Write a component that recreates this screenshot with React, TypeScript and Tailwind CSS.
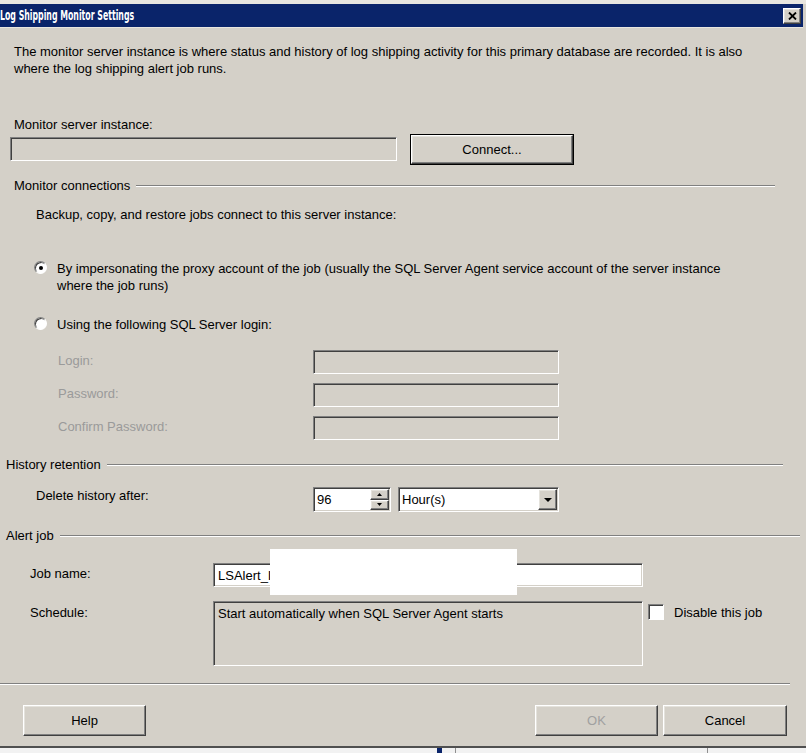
import React from 'react'

const sunken =
  'border border-t-[#808080] border-l-[#808080] border-b-white border-r-white shadow-[inset_1px_1px_0_#404040,inset_-1px_-1px_0_#d4d0c8]'
const raised =
  'border border-t-white border-l-white border-b-[#404040] border-r-[#404040] shadow-[inset_-1px_-1px_0_#808080,inset_1px_1px_0_#e4e2dc]'

const GroupHeader: React.FC<{ label: string; className: string }> = ({ label, className }) => (
  <div className={`flex items-center h-[17px] ${className}`}>
    <span>{label}</span>
    <div className="flex-1 ml-[6px] border-t border-t-[#808080] border-b border-b-white" />
  </div>
)

const Radio: React.FC<{ checked?: boolean }> = ({ checked }) => (
  <div className="w-[13px] h-[13px] rounded-full bg-white border border-t-[#808080] border-l-[#808080] border-b-white border-r-white shadow-[inset_1px_1px_0_#404040] flex items-center justify-center shrink-0">
    {checked && <div className="w-[4px] h-[4px] rounded-full bg-black" />}
  </div>
)

const Button: React.FC<{ label: string; disabled?: boolean; className: string }> = ({ label, disabled, className }) => (
  <div
    className={`${raised} bg-[#d4d0c8] h-[31px] flex items-center justify-center ${className} ${
      disabled ? 'text-[#a0a0a0]' : 'text-black'
    }`}
  >
    {label}
  </div>
)

const LoginRow: React.FC<{ label: string; className?: string }> = ({ label, className }) => (
  <div className={`flex items-center h-[24px] ${className ?? ''}`}>
    <span className="w-[313px] pl-[58px] text-[#9a9a9a] -mt-[4px]">{label}</span>
    <div className={`${sunken} w-[246px] h-[24px] bg-[#d4d0c8]`} />
  </div>
)

export default function App() {
  return (
    <div
      className="relative w-[806px] h-[753px] overflow-hidden bg-[#d4d0c8] text-black text-[13px] leading-[17px]"
      style={{ fontFamily: '"Liberation Sans", Arial, sans-serif' }}
    >
      {/* title bar */}
      <div className="h-[4px] bg-[#e8e6e0]" />
      <div className="h-[23px] bg-[#0a246a] flex items-center justify-between pr-[2px] mr-[3px]">
        <span
          className="text-white font-bold text-[14px] origin-left scale-x-[0.62] whitespace-nowrap"
          style={{ fontFamily: '"Liberation Sans Narrow", "DejaVu Sans Condensed", "Liberation Sans", sans-serif' }}
        >
          Log Shipping Monitor Settings
        </span>
        <div className={`${raised} bg-[#d4d0c8] w-[18px] h-[16px] flex items-center justify-center`}>
          <svg width="9" height="8" viewBox="0 0 9 8">
            <path d="M1 0.5 L8 7.5 M8 0.5 L1 7.5" stroke="#000" strokeWidth="1.8" />
          </svg>
        </div>
      </div>
      <div className="h-[1px] bg-[#e8e6e0] mr-[3px]" />

      {/* intro */}
      <p className="mt-[15px] pl-[14px] pr-[40px]">
        The monitor server instance is where status and history of log shipping activity for this primary database are
        recorded. It is also where the log shipping alert job runs.
      </p>

      <div className="mt-[39px] pl-[14px]">Monitor server instance:</div>
      <div className="mt-[1px] flex items-start pl-[10px] h-[31px]">
        <div className={`${sunken} mt-[3px] w-[387px] h-[24px] bg-[#d4d0c8]`} />
        <div className="ml-[13px] w-[164px] h-[31px] border border-black">
          <div className={`${raised} w-full h-full bg-[#d4d0c8] flex items-center justify-center`}>Connect...</div>
        </div>
      </div>

      {/* monitor connections */}
      <GroupHeader label="Monitor connections" className="mt-[12px] pl-[14px] pr-[31px]" />
      <div className="mt-[12px] pl-[36px]">Backup, copy, and restore jobs connect to this server instance:</div>

      <div className="mt-[37px] flex items-start pl-[34px] pr-[56px]">
        <div className="mt-[1px]">
          <Radio checked />
        </div>
        <span className="ml-[10px]">
          By impersonating the proxy account of the job (usually the SQL Server Agent service account of the server
          instance where the job runs)
        </span>
      </div>

      <div className="mt-[22px] flex items-start pl-[34px]">
        <div className="mt-[1px]">
          <Radio />
        </div>
        <span className="ml-[10px]">Using the following SQL Server login:</span>
      </div>

      <LoginRow label="Login:" className="mt-[17px]" />
      <LoginRow label="Password:" className="mt-[9px]" />
      <LoginRow label="Confirm Password:" className="mt-[9px]" />

      {/* history retention */}
      <GroupHeader label="History retention" className="mt-[16px] pl-[6px] pr-[23px]" />
      <div className="mt-[14px] flex items-start h-[25px]">
        <span className="w-[313px] pl-[36px]">Delete history after:</span>
        <div className={`${sunken} w-[78px] h-[25px] bg-white flex items-center`}>
          <span className="flex-1 pl-[3px]">96</span>
          <div className="w-[19px] h-[21px] mr-[1px] flex flex-col">
            <div className={`${raised} flex-1 bg-[#d4d0c8] flex items-center justify-center`}>
              <svg width="5" height="3" viewBox="0 0 5 3">
                <path d="M2.5 0 L5 3 L0 3 Z" fill="#000" />
              </svg>
            </div>
            <div className={`${raised} flex-1 bg-[#d4d0c8] flex items-center justify-center`}>
              <svg width="5" height="3" viewBox="0 0 5 3">
                <path d="M0 0 L5 0 L2.5 3 Z" fill="#000" />
              </svg>
            </div>
          </div>
        </div>
        <div className={`${sunken} ml-[7px] w-[161px] h-[25px] bg-white flex items-center`}>
          <span className="flex-1 pl-[3px]">Hour(s)</span>
          <div className={`${raised} w-[19px] h-[21px] mr-[1px] bg-[#d4d0c8] flex items-center justify-center`}>
            <svg width="8" height="4" viewBox="0 0 8 4">
              <path d="M0 0 L8 0 L4 4 Z" fill="#000" />
            </svg>
          </div>
        </div>
      </div>

      {/* alert job */}
      <GroupHeader label="Alert job" className="mt-[15px] pl-[6px] pr-[6px]" />
      <div className="mt-[19px] flex items-start h-[24px]">
        <span className="w-[213px] pl-[30px] mt-[2px]">Job name:</span>
        <div className={`${sunken} w-[430px] h-[24px] bg-white flex items-center pl-[4px]`}>LSAlert_I</div>
      </div>
      <div className="mt-[14px] flex items-start h-[65px]">
        <span className="w-[213px] pl-[30px] mt-[3px]">Schedule:</span>
        <div className={`${sunken} w-[430px] h-[65px] bg-[#d4d0c8] pl-[4px] pt-[3px]`}>
          Start automatically when SQL Server Agent starts
        </div>
        <div className="ml-[5px] mt-[3px] w-[16px] h-[16px] bg-white border border-t-[#808080] border-l-[#808080] border-b-white border-r-white shadow-[inset_1px_1px_0_#404040]" />
        <span className="ml-[10px] mt-[3px]">Disable this job</span>
      </div>

      {/* footer */}
      <div className="mt-[17px] mr-[16px] border-t border-t-[#808080] border-b border-b-white" />
      <div className="mt-[20px] flex items-start">
        <Button label="Help" className="ml-[23px] w-[123px]" />
        <Button label="OK" disabled className="ml-[389px] w-[123px]" />
        <Button label="Cancel" className="ml-[5px] w-[124px]" />
      </div>

      {/* bottom strip of the window behind */}
      <div className="absolute left-0 right-0 top-[746px] h-[2px] bg-[#505050]" />
      <div className="absolute left-0 right-0 top-[748px] bottom-0 bg-[#f2f2f2]">
        <div className="absolute left-[437px] top-0 w-[5px] h-full bg-[#0a246a]" />
        <div className="absolute left-[455px] top-0 w-[1px] h-full bg-[#909090]" />
        <div className="absolute left-[707px] top-0 w-[1px] h-full bg-[#909090]" />
      </div>

      {/* redaction */}
      <div className="absolute left-[270px] top-[549px] w-[247px] h-[46px] bg-white" />
    </div>
  )
}
